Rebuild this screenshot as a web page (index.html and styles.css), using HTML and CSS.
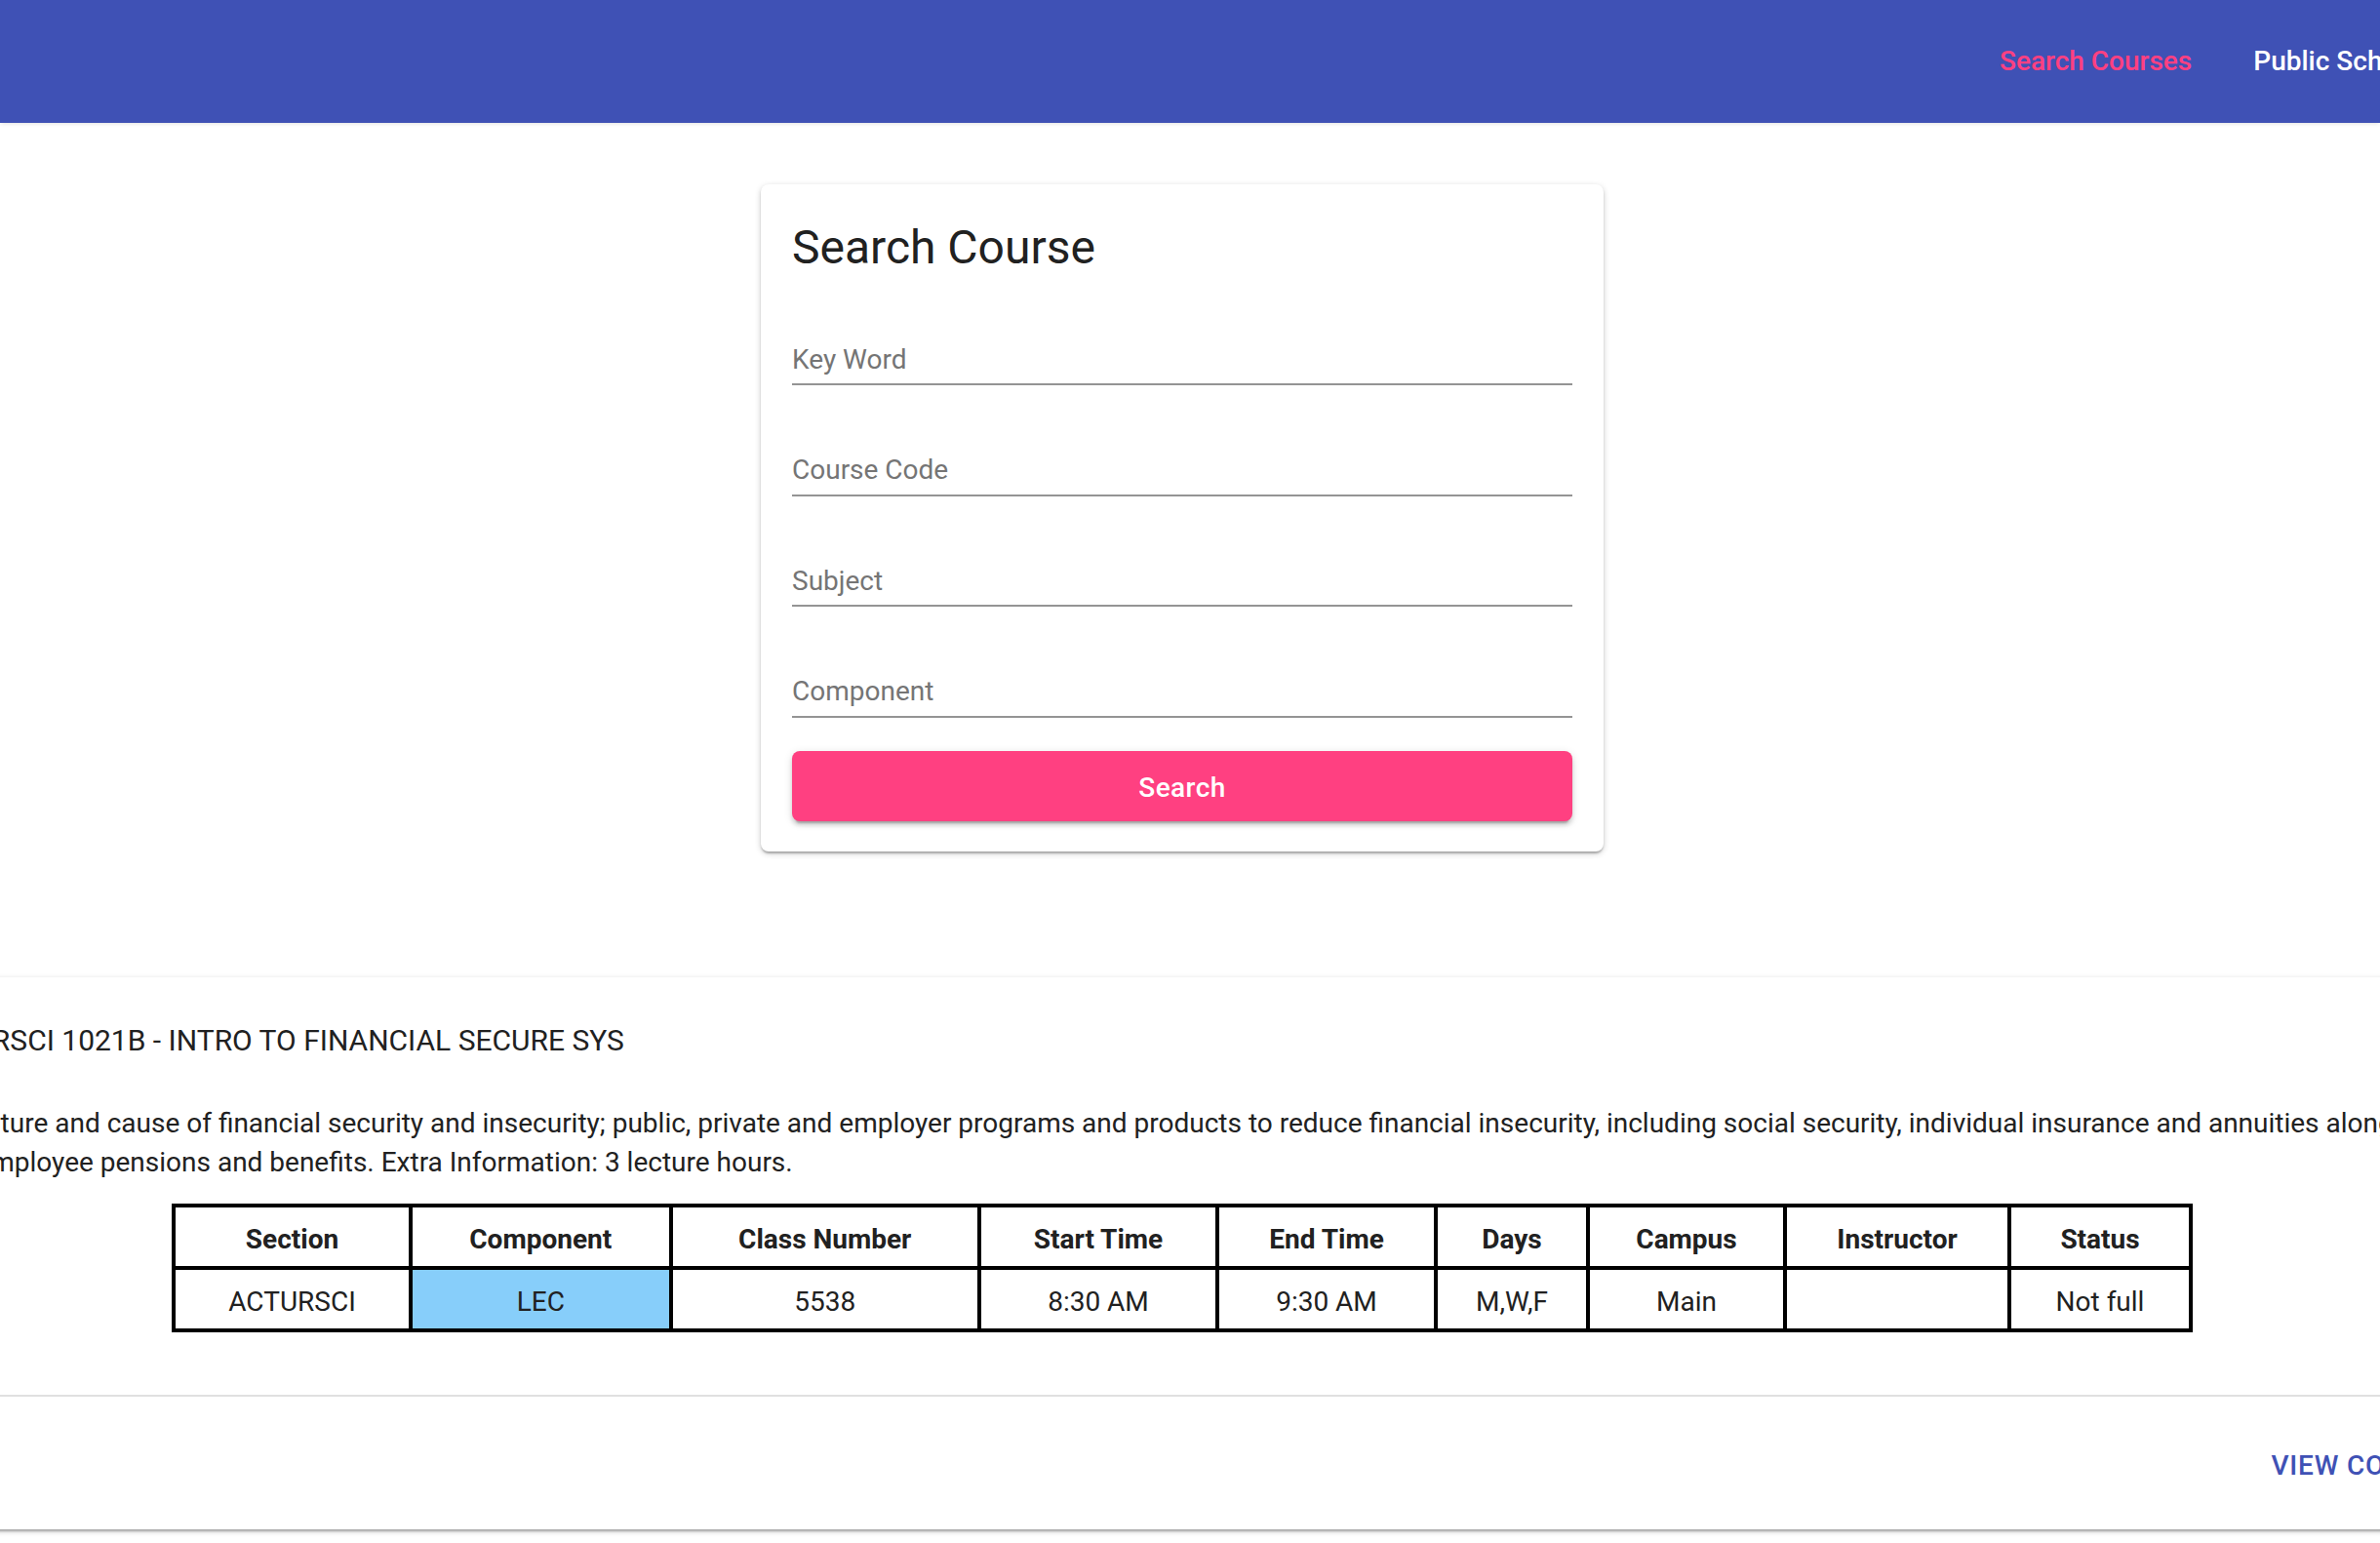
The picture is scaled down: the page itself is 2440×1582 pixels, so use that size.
FILE: index.html
```html
<!DOCTYPE html>
<html lang="en">
<head>
<meta charset="utf-8">
<title>Search Course</title>
<link rel="stylesheet" href="styles.css">
</head>
<body>
<header class="appbar">
  <nav class="toolbar">
    <a class="nav-link active" href="#">Search Courses</a>
    <a class="nav-link" href="#">Public Schedules</a>
  </nav>
</header>
<main class="page">
  <section class="search-card">
    <h1 class="card-title">Search Course</h1>
    <div class="field"><span class="field-label">Key Word</span></div>
    <div class="field"><span class="field-label">Course Code</span></div>
    <div class="field"><span class="field-label">Subject</span></div>
    <div class="field"><span class="field-label">Component</span></div>
    <button class="search-btn" type="button">Search</button>
  </section>
  <div class="results">
    <article class="panel">
      <div class="panel-summary">
        <p class="course-title">ACTURSCI 1021B - INTRO TO FINANCIAL SECURE SYS</p>
      </div>
      <div class="panel-details">
        <p class="course-desc">The nature and cause of financial security and insecurity; public, private and employer programs and products to reduce financial insecurity, including social security, individual insurance and annuities along with employee pensions and benefits. Extra Information: 3 lecture hours.</p>
        <table class="sections">
          <thead>
            <tr>
              <th class="c1">Section</th>
              <th class="c2">Component</th>
              <th class="c3">Class Number</th>
              <th class="c4">Start Time</th>
              <th class="c5">End Time</th>
              <th class="c6">Days</th>
              <th class="c7">Campus</th>
              <th class="c8">Instructor</th>
              <th class="c9">Status</th>
            </tr>
          </thead>
          <tbody>
            <tr>
              <td>ACTURSCI</td>
              <td class="lec">LEC</td>
              <td>5538</td>
              <td>8:30 AM</td>
              <td>9:30 AM</td>
              <td>M,W,F</td>
              <td>Main</td>
              <td></td>
              <td>Not full</td>
            </tr>
          </tbody>
        </table>
      </div>
      <div class="panel-actions">
        <button class="view-btn" type="button">VIEW COURSE</button>
      </div>
    </article>
  </div>
</main>
</body>
</html>
```
FILE: styles.css
```css
html, body {
  margin: 0;
  padding: 0;
}

body {
  width: 2440px;
  height: 1582px;
  overflow: hidden;
  background: #ffffff;
  font-family: Roboto, "Liberation Sans", Arial, sans-serif;
  color: #212121;
}

/* ---------- App bar ---------- */
.appbar {
  height: 126px;
  background: #3f51b5;
  box-shadow: 0 2px 4px -1px rgba(0, 0, 0, 0.12);
  position: relative;
  z-index: 1;
}

.toolbar {
  display: flex;
  align-items: center;
  height: 100%;
  padding-left: 2050px;
  gap: 63px;
  white-space: nowrap;
  overflow: hidden;
}

.nav-link {
  font-size: 28px;
  font-weight: 500;
  color: #ffffff;
  text-decoration: none;
  line-height: 40px;
}

.nav-link.active {
  color: #ff4081;
}

/* ---------- Page ---------- */
.page {
  width: 2424px;
  display: flex;
  flex-direction: column;
  align-items: center;
  padding-top: 63px;
}

.search-card {
  width: 864px;
  box-sizing: border-box;
  padding: 35px 32px 31px;
  background: #ffffff;
  border-radius: 8px;
  box-shadow: 0 2px 6px 0 rgba(0, 0, 0, 0.2),
              0 2px 2px 0 rgba(0, 0, 0, 0.14),
              0 4px 2px -2px rgba(0, 0, 0, 0.12);
}

.card-title {
  margin: 0;
  padding-top: 1.5px;
  font-size: 48px;
  line-height: 56px;
  font-weight: 400;
  color: #212121;
}

.field {
  margin-top: 20px;
  padding-top: 49px;
  border-bottom: 2px solid #949494;
}

.field-label {
  display: block;
  font-size: 28px;
  line-height: 36px;
  padding-bottom: 6.5px;
  color: #757575;
}

.search-btn {
  display: block;
  width: 100%;
  height: 72px;
  margin-top: 34.5px;
  padding: 3px 0 0;
  border: 0;
  border-radius: 8px;
  background: #ff4081;
  color: #ffffff;
  font-family: Roboto, "Liberation Sans", Arial, sans-serif;
  font-size: 28px;
  font-weight: 500;
  letter-spacing: 0.4px;
  box-shadow: 0 2px 10px 0 rgba(0, 0, 0, 0.12),
              0 4px 4px 0 rgba(0, 0, 0, 0.14),
              0 6px 2px -4px rgba(0, 0, 0, 0.2);
}

/* ---------- Result panel ---------- */
.results {
  width: 100%;
  display: flex;
  justify-content: center;
  margin-top: 129px;
}

.panel {
  flex: 0 0 2688px;
  background: #ffffff;
  box-shadow: 0 2px 6px 0 rgba(0, 0, 0, 0.2),
              0 2px 2px 0 rgba(0, 0, 0, 0.14),
              0 4px 2px -2px rgba(0, 0, 0, 0.12);
}

.panel-summary {
  padding: 45px 48px 0;
}

.course-title {
  margin: 0;
  font-size: 30px;
  line-height: 40px;
  color: #212121;
}

.panel-details {
  padding: 45px 48px 64px;
}

.course-desc {
  margin: 0;
  font-size: 28px;
  line-height: 40px;
  color: #212121;
}

.sections {
  margin: 22px auto 0;
  border-collapse: collapse;
  border: 4px solid #000000;
  table-layout: fixed;
}

.sections th,
.sections td {
  border: 4px solid #000000;
  height: 54px;
  padding: 6px 0 0;
  font-size: 28px;
  line-height: 40px;
  text-align: center;
  color: #212121;
  white-space: nowrap;
}

.sections th {
  font-weight: 700;
}

.sections td {
  font-weight: 400;
}

.sections .lec {
  background: #87cefa;
}

.c1 { width: 239px; }
.c2 { width: 262.5px; }
.c3 { width: 312.5px; }
.c4 { width: 240px; }
.c5 { width: 220px; }
.c6 { width: 152px; }
.c7 { width: 198px; }
.c8 { width: 226px; }
.c9 { width: 182px; }

.panel-actions {
  display: flex;
  justify-content: flex-end;
  align-items: center;
  height: 130px;
  padding: 6px 23px 0 0;
  border-top: 2px solid #e0e0e0;
}

.view-btn {
  padding: 12px 16px;
  border: 0;
  background: none;
  color: #3f51b5;
  font-family: Roboto, "Liberation Sans", Arial, sans-serif;
  font-size: 28px;
  font-weight: 500;
  letter-spacing: 0.8px;
  line-height: 48px;
}
```
